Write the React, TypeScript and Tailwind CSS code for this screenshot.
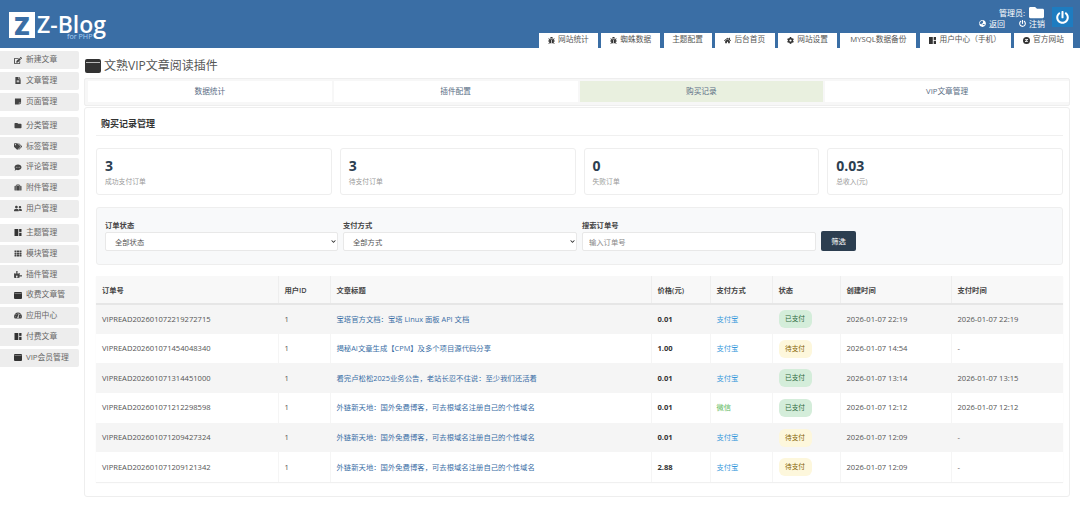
import type { ComponentType } from "react";
import {
  FaBug,
  FaChevronDown,
  FaCog,
  FaCommentDots,
  FaEdit,
  FaFileAlt,
  FaFolder,
  FaGlobeAsia,
  FaHome,
  FaPowerOff,
  FaPuzzlePiece,
  FaStickyNote,
  FaSuitcase,
  FaTachometerAlt,
  FaTags,
  FaTh,
  FaUserFriends,
} from "react-icons/fa";

type Icon = ComponentType<{ className?: string }>;

function WindowIcon({ className }: { className?: string }) {
  return (
    <svg viewBox="0 0 16 14" className={className}>
      <rect x="0" y="0" width="16" height="14" rx="2" fill="#333" />
      <rect x="1" y="3" width="14" height="0.8" fill="#ddd" />
    </svg>
  );
}

function LayoutIcon({ className }: { className?: string }) {
  return (
    <svg viewBox="0 0 12 12" className={className} fill="#333">
      <rect x="0" y="0" width="6.5" height="12" />
      <rect x="8" y="0" width="4" height="5" />
      <rect x="8" y="6.5" width="4" height="5.5" />
    </svg>
  );
}

function ZCircleIcon({ className }: { className?: string }) {
  return (
    <svg viewBox="0 0 12 12" className={className}>
      <circle cx="6" cy="6" r="6" fill="#333" />
      <path d="M3.5 3.5h5v1.2L5.4 7.3h3.1v1.2h-5V7.3l3.1-2.6H3.5z" fill="#fff" />
    </svg>
  );
}

const navTabs: { label: string; icon?: Icon; width: string }[] = [
  { label: "网站统计", icon: FaBug, width: "w-[59px]" },
  { label: "蜘蛛数据", icon: FaBug, width: "w-[59px]" },
  { label: "主题配置", width: "w-[48px]" },
  { label: "后台首页", icon: FaHome, width: "w-[60px]" },
  { label: "网站设置", icon: FaCog, width: "w-[59px]" },
  { label: "MYSQL数据备份", width: "w-[76px]" },
  { label: "用户中心（手机）", icon: LayoutIcon, width: "w-[91px]" },
  { label: "官方网站", icon: ZCircleIcon, width: "w-[59px]" },
];

const menuGroups: { label: string; icon: Icon }[][] = [
  [
    { label: "新建文章", icon: FaEdit },
    { label: "文章管理", icon: FaFileAlt },
    { label: "页面管理", icon: FaStickyNote },
  ],
  [
    { label: "分类管理", icon: FaFolder },
    { label: "标签管理", icon: FaTags },
    { label: "评论管理", icon: FaCommentDots },
    { label: "附件管理", icon: FaSuitcase },
    { label: "用户管理", icon: FaUserFriends },
  ],
  [
    { label: "主题管理", icon: LayoutIcon },
    { label: "模块管理", icon: FaTh },
    { label: "插件管理", icon: FaPuzzlePiece },
    { label: "收费文章管", icon: WindowIcon },
    { label: "应用中心", icon: FaTachometerAlt },
    { label: "付费文章", icon: LayoutIcon },
    { label: "VIP会员管理", icon: WindowIcon },
  ],
];

const stats = [
  { value: "3", label: "成功支付订单" },
  { value: "3", label: "待支付订单" },
  { value: "0", label: "失败订单" },
  { value: "0.03", label: "总收入(元)" },
];

const orders = [
  { no: "VIPREAD202601072219272715", title: "宝塔官方文档：宝塔 Linux 面板 API 文档", price: "0.01", pay: "支付宝", paid: true, created: "2026-01-07 22:19", paidAt: "2026-01-07 22:19" },
  { no: "VIPREAD202601071454048340", title: "揭秘AI文章生成【CPM】及多个项目源代码分享", price: "1.00", pay: "支付宝", paid: false, created: "2026-01-07 14:54", paidAt: "-" },
  { no: "VIPREAD202601071314451000", title: "看完卢松松2025业务公告，老站长忍不住说：至少我们还活着", price: "0.01", pay: "支付宝", paid: true, created: "2026-01-07 13:14", paidAt: "2026-01-07 13:15" },
  { no: "VIPREAD202601071212298598", title: "外链新天地：国外免费博客，可去根域名注册自己的个性域名", price: "0.01", pay: "微信", paid: true, created: "2026-01-07 12:12", paidAt: "2026-01-07 12:12" },
  { no: "VIPREAD202601071209427324", title: "外链新天地：国外免费博客，可去根域名注册自己的个性域名", price: "0.01", pay: "支付宝", paid: false, created: "2026-01-07 12:09", paidAt: "-" },
  { no: "VIPREAD202601071209121342", title: "外链新天地：国外免费博客，可去根域名注册自己的个性域名", price: "2.88", pay: "支付宝", paid: false, created: "2026-01-07 12:09", paidAt: "-" },
];

const columns = [
  { label: "订单号", width: "w-[182px]" },
  { label: "用户ID", width: "w-[52px]" },
  { label: "文章标题", width: "w-[321px]" },
  { label: "价格(元)", width: "w-[59px]" },
  { label: "支付方式", width: "w-[62px]" },
  { label: "状态", width: "w-[68px]" },
  { label: "创建时间", width: "w-[111px]" },
  { label: "支付时间", width: "w-[112px]" },
];

function FilterSelect({ label, value, width }: { label: string; value: string; width: string }) {
  return (
    <label className={`block text-[7.3px] font-semibold leading-[10px] text-[#444] ${width}`}>
      {label}
      <span className="relative mt-[2px] block">
        <select className="block h-[19px] w-full appearance-none rounded-[2px] border border-[#e8e8e8] bg-white pl-[9px] text-[7.3px] font-normal text-[#555]">
          <option>{value}</option>
        </select>
        <FaChevronDown className="absolute right-[2px] top-[7px] h-[5px] w-[5px] text-[#222]" />
      </span>
    </label>
  );
}

export default function App() {
  return (
    <div className="h-[520px] w-[1080px] overflow-hidden bg-white font-['Open_Sans','Noto_Sans_CJK_SC',sans-serif] text-[#555]">
      {/* Header */}
      <header className="flex h-[48px] justify-between bg-[#3a6ea5] pr-[7px]">
        <div className="flex items-start pl-[9px] pt-[12px]">
          <div className="flex h-[26px] w-[26px] items-center justify-center bg-white text-[25px] font-extrabold leading-none text-[#3a6ea5]">
            Z
          </div>
          <div className="relative ml-[2px] mt-[-3px] text-[23px] font-semibold leading-[30px] text-white">
            Z-Blog
            <span className="absolute left-[30px] top-[23px] whitespace-nowrap text-[7.2px] font-normal leading-[8px] text-[#a8d0f5]">
              for PHP
            </span>
          </div>
        </div>

        <div className="flex flex-col items-end">
          <div className="flex h-[33px] items-start pt-[7px]">
            <div className="mr-[7px] mt-[-1px] text-[8px] leading-[11px] text-white">
              <div className="flex h-[12px] items-center justify-end">
                <span className="mr-[3px]">管理员:</span>
                <FaFolder className="h-[15px] w-[17px] shrink-0 text-white" />
              </div>
              <div className="flex items-center">
                <FaGlobeAsia className="mr-[3px] h-[7px] w-[7px]" />
                <span className="mr-[14px]">返回</span>
                <FaPowerOff className="mr-[3px] h-[7px] w-[7px]" />
                <span>注销</span>
              </div>
            </div>
            <div className="flex h-[20px] w-[21px] items-center justify-center bg-[#1e7cc0]">
              <FaPowerOff className="h-[13px] w-[13px] text-white" />
            </div>
          </div>
          <nav className="flex gap-[3.3px]">
            {navTabs.map((tab) => (
              <div
                key={tab.label}
                className={`flex h-[15px] items-center justify-center gap-[3px] whitespace-nowrap bg-white pb-[1px] text-[7.7px] text-[#555] ${tab.width}`}
              >
                {tab.icon && <tab.icon className="h-[7px] w-[7px] text-[#333]" />}
                {tab.label}
              </div>
            ))}
          </nav>
        </div>
      </header>

      <div className="flex">
        {/* Sidebar */}
        <aside className="flex w-[79px] shrink-0 flex-col gap-[6px] pt-[3px]">
          {menuGroups.map((group, i) => (
            <div key={i} className="flex flex-col gap-[2.8px]">
              {group.map((item) => (
                <div
                  key={item.label}
                  className="flex h-[18px] items-center whitespace-nowrap rounded-r-[2px] bg-[#ededed] pl-[14px] text-[7.8px] text-[#666]"
                >
                  <item.icon className="mr-[4px] h-[7px] w-[8px] shrink-0 text-[#444]" />
                  {item.label}
                </div>
              ))}
            </div>
          ))}
        </aside>

        {/* Main */}
        <main className="ml-[5px] w-[986px]">
          <div className="flex h-[30px] items-center pl-[1px] pt-[5px]">
            <WindowIcon className="mr-[3px] h-[14px] w-[16px]" />
            <h1 className="text-[12px] font-normal leading-none text-[#555]">文熟VIP文章阅读插件</h1>
          </div>

          <div className="grid grid-cols-4 gap-[2px] rounded-[2px] border border-[#eee] bg-[#f7f7f7] pb-[3px] pl-[3px] pt-[2px]">
            {["数据统计", "插件配置", "购买记录", "VIP文章管理"].map((tab) => (
              <div
                key={tab}
                className={`flex h-[21px] items-center justify-center pt-[1px] text-[7.7px] text-[#5a6e85] ${tab === "购买记录" ? "bg-[#e9f0df]" : "bg-white"}`}
              >
                {tab}
              </div>
            ))}
          </div>

          <section className="mt-[1px] h-[390px] rounded-[3px] border border-[#eee] bg-white pl-[11px] pr-[6px]">
            <h2 className="flex h-[28px] items-center border-b border-[#f0f0f0] pl-[5px] pt-[5px] text-[9px] font-semibold text-[#333]">
              购买记录管理
            </h2>

            <div className="mt-[12px] grid grid-cols-4 gap-[8px]">
              {stats.map((stat) => (
                <div key={stat.label} className="h-[47px] rounded-[3px] border border-[#eee] bg-white pl-[8px] pt-[7px]">
                  <div className="text-[14px] font-bold leading-[20px] text-[#2c3e50]">{stat.value}</div>
                  <div className="mt-[1px] text-[6.8px] leading-[10px] text-[#999]">{stat.label}</div>
                </div>
              ))}
            </div>

            {/* Filter */}
            <div className="mt-[12px] flex h-[58px] items-end gap-[5px] rounded-[3px] border border-[#eee] bg-[#f8f9fa] pb-[13px] pl-[8px]">
              <FilterSelect label="订单状态" value="全部状态" width="w-[233px]" />
              <FilterSelect label="支付方式" value="全部方式" width="w-[234px]" />
              <label className="block w-[234px] text-[7.3px] font-semibold leading-[10px] text-[#444]">
                搜索订单号
                <input
                  placeholder="输入订单号"
                  className="mt-[2px] block h-[19px] w-full rounded-[2px] border border-[#e8e8e8] bg-white pl-[6px] text-[7.3px] font-normal text-[#555] placeholder:text-[#888]"
                />
              </label>
              <button className="h-[20px] w-[35px] rounded-[2px] bg-[#2c3e50] text-[7.3px] text-white">筛选</button>
            </div>

            {/* Table */}
            <table className="mt-[11px] w-[967px] table-fixed border-collapse text-[7.6px] text-[#555] shadow-[0_1px_1px_rgba(0,0,0,0.06)]">
              <thead>
                <tr className="h-[28px] border-b-2 border-[#e6e6e6] bg-[#f8f8f8]">
                  {columns.map((col) => (
                    <th key={col.label} className={`border-r border-[#eee] pl-[6px] pt-[2px] text-left text-[7.3px] font-semibold text-[#444] last:border-r-0 ${col.width}`}>
                      {col.label}
                    </th>
                  ))}
                </tr>
              </thead>
              <tbody>
                {orders.map((order, i) => (
                  <tr key={order.no} className={`h-[29.7px] ${i % 2 === 0 ? "bg-[#f5f5f5]" : "bg-white"}`}>
                    <td className="border-r border-[#f5f5f5] pl-[6px]">{order.no}</td>
                    <td className="border-r border-[#f5f5f5] pl-[6px]">1</td>
                    <td className="whitespace-nowrap border-r border-[#f5f5f5] pl-[6px] text-[7.35px] text-[#3a6ea5]">{order.title}</td>
                    <td className="border-r border-[#f5f5f5] pl-[6px] font-bold text-[#333]">{order.price}</td>
                    <td className={`border-r border-[#f5f5f5] pl-[6px] text-[7.3px] ${order.pay === "微信" ? "text-[#5cb85c]" : "text-[#3498db]"}`}>{order.pay}</td>
                    <td className="border-r border-[#f5f5f5] pl-[6px]">
                      <span className={`flex h-[18px] w-[33px] items-center justify-center rounded-[6px] text-[6.7px] ${order.paid ? "bg-[#d4edda] text-[#2f6b3e]" : "bg-[#fdf7dc] text-[#856404]"}`}>
                        {order.paid ? "已支付" : "待支付"}
                      </span>
                    </td>
                    <td className="border-r border-[#f5f5f5] pl-[6px]">{order.created}</td>
                    <td className="pl-[6px]">{order.paidAt}</td>
                  </tr>
                ))}
              </tbody>
            </table>
          </section>
        </main>
      </div>
    </div>
  );
}
